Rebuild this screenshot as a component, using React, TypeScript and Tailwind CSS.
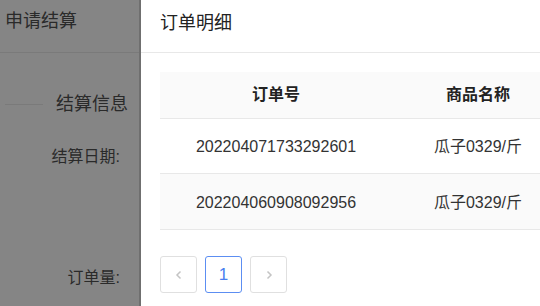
import React from "react";

const font = { fontFamily: '"Liberation Sans", "Noto Sans CJK SC", sans-serif' };

export default function App() {
  const rows = [
    { id: "202204071733292601", name: "瓜子0329/斤", cls: "h-[55px] bg-white" },
    { id: "202204060908092956", name: "瓜子0329/斤", cls: "h-[56px] bg-[#fafafa]" },
  ];
  return (
    <div className="flex h-[306px] w-[540px] overflow-hidden" style={font}>
      {/* left masked page */}
      <div className="flex h-full w-[139px] shrink-0 flex-col bg-[#858585] text-[#2a2a2a]">
        <div className="flex h-[53px] items-center border-b border-[#7a7a7a] pl-[5px] pb-[10px] text-[18px]">
          申请结算
        </div>
        <div className="mt-[38px] flex items-center">
          <div className="ml-[5px] h-px w-[38px] bg-[#7a7a7a]" />
          <div className="ml-[13px] text-[18px] leading-[26px]">结算信息</div>
        </div>
        <div className="mt-[28px] pr-[19px] text-right text-[16px]">结算日期:</div>
        <div className="mt-[97px] pr-[19px] text-right text-[16px]">订单量:</div>
      </div>
      {/* drawer */}
      <div className="flex h-full flex-1 flex-col border-l-2 border-[#6f6f6f] bg-white">
        <div className="flex h-[53px] items-center border-b border-[#e8e8e8] pl-[19px] pb-[6px] text-[18px] text-[#222]">
          订单明细
        </div>
        <div className="mt-[19px] ml-[19px] w-[440px]">
          <div className="flex h-[47px] items-center border-b border-[#e8e8e8] bg-[#fafafa] text-[16px] font-bold text-[#222]">
            <div className="w-[232px] text-center">订单号</div>
            <div className="w-[172px] text-center">商品名称</div>
          </div>
          {rows.map((r) => (
            <div
              key={r.id}
              className={`flex items-center border-b border-[#e8e8e8] pt-[2px] text-[16px] text-[#333] ${r.cls}`}
            >
              <div className="w-[232px] text-center">{r.id}</div>
              <div className="w-[172px] text-center">{r.name}</div>
            </div>
          ))}
        </div>
        <div className="mt-[26px] ml-[19px] flex gap-[8px]">
          <div className="flex h-[37px] w-[37px] items-center justify-center rounded-[3px] border border-[#e0e0e0] text-[#c4c4c4]">
            <svg width="12" height="12" viewBox="0 0 12 12" fill="none" stroke="currentColor" strokeWidth="1.5">
              <path d="M7.5 2.5 L4 6 L7.5 9.5" />
            </svg>
          </div>
          <div className="flex h-[37px] w-[37px] items-center justify-center rounded-[3px] border border-[#5c8ef2] text-[17px] text-[#4a7ff0]">
            1
          </div>
          <div className="flex h-[37px] w-[37px] items-center justify-center rounded-[3px] border border-[#e0e0e0] text-[#c4c4c4]">
            <svg width="12" height="12" viewBox="0 0 12 12" fill="none" stroke="currentColor" strokeWidth="1.5">
              <path d="M4.5 2.5 L8 6 L4.5 9.5" />
            </svg>
          </div>
        </div>
      </div>
    </div>
  );
}
